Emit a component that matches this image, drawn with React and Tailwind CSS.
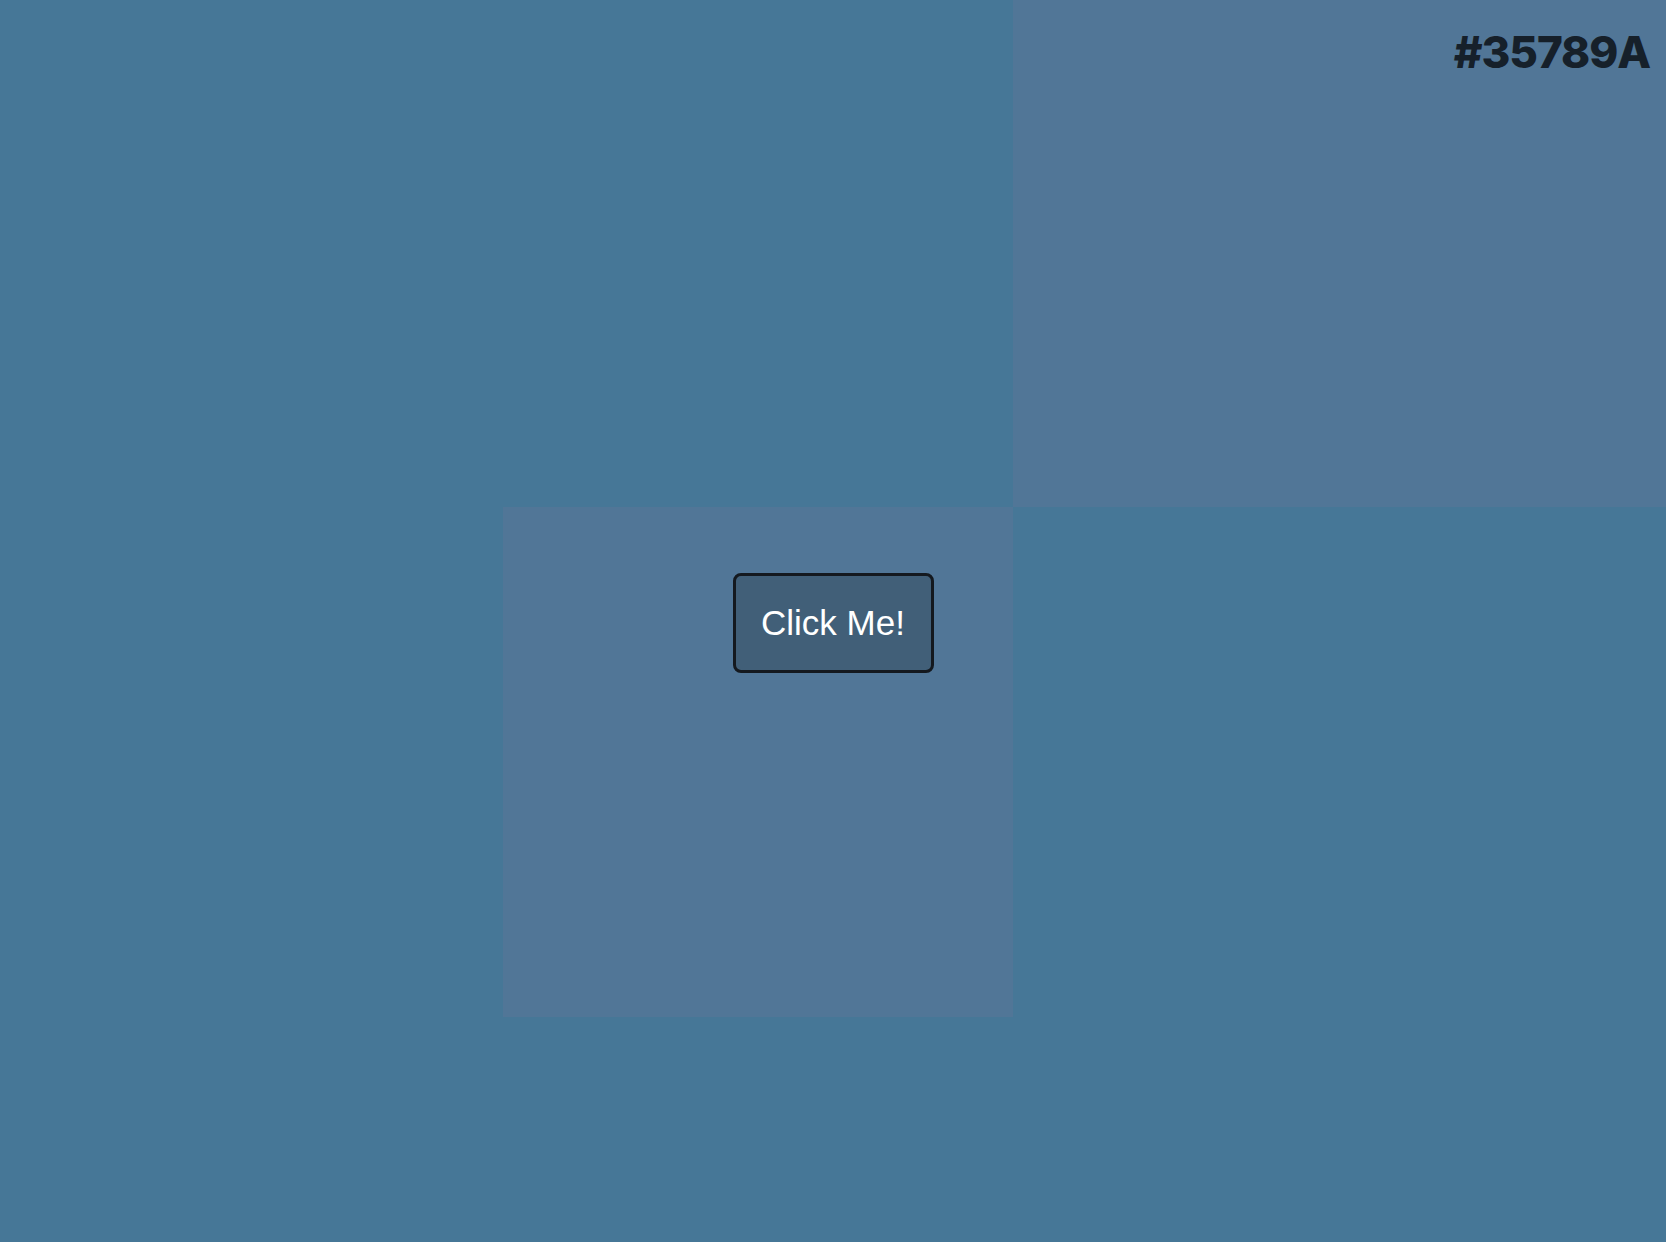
export default function App() {
  return (
    <div className="relative w-full h-[1242px] overflow-hidden bg-[#467797]">
      {/* ---------------- BACKGROUND CELLS ---------------- */}
      <div className="grid h-full grid-cols-[503px_510px_1fr] grid-rows-[507px_510px_1fr]">
        <div />
        <div />
        <div className="bg-[#517697] flex justify-end items-start pr-4 pt-[26px]">
          <h1 className="font-['Inter',sans-serif] font-extrabold text-[44px] leading-[52px] text-[#16202a] tracking-tight">
            #35789A
          </h1>
        </div>
        <div />
        <div className="bg-[#517697]" />
        <div />
        <div />
        <div />
        <div />
      </div>

      {/* ---------------- BUTTON ---------------- */}
      <div className="absolute inset-0 flex items-center justify-center">
        <button className="w-[201px] h-[100px] mt-[4px] rounded-[8px] border-[3.5px] border-[#14191f] bg-[#415f78] text-white text-[35px] font-['Liberation_Sans',Arial,sans-serif]">
          Click Me!
        </button>
      </div>
    </div>
  );
}
